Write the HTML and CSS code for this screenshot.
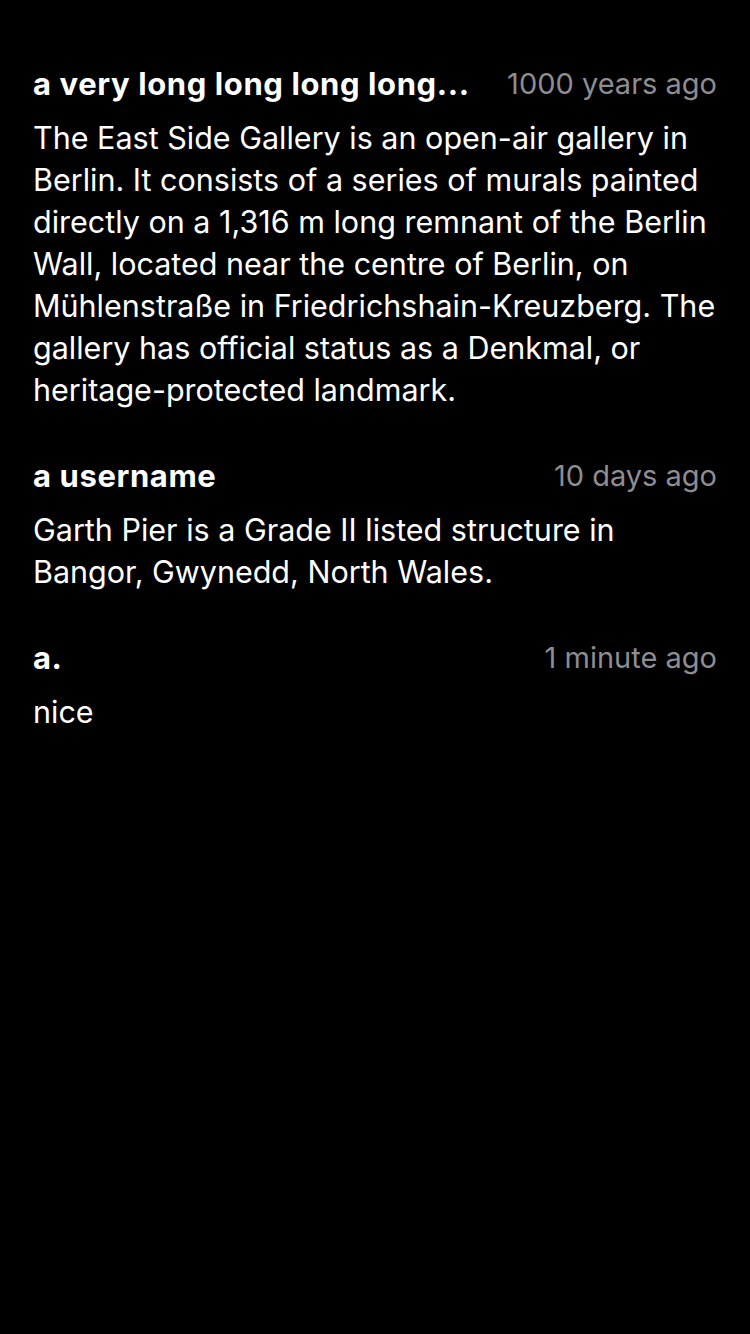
FILE: index.html
```html
<!DOCTYPE html>
<html lang="en">
<head>
<meta charset="utf-8">
<title>Comments</title>
<link rel="stylesheet" href="styles.css">
</head>
<body>
<main class="comments">
  <article class="comment">
    <header class="comment-head">
      <span class="author">a very long long long long...</span>
      <span class="time">1000 years ago</span>
    </header>
    <p class="body">The East Side Gallery is an open-air gallery in Berlin. It consists of a series of murals painted directly on a 1,316&nbsp;m long remnant of the Berlin Wall, located near the centre of Berlin, on Mühlenstraße in Friedrichshain-Kreuzberg. The gallery has official status as a Denkmal, or heritage-protected landmark.</p>
  </article>
  <article class="comment">
    <header class="comment-head">
      <span class="author">a username</span>
      <span class="time">10 days ago</span>
    </header>
    <p class="body">Garth Pier is a Grade II listed structure in Bangor, Gwynedd, North Wales.</p>
  </article>
  <article class="comment">
    <header class="comment-head">
      <span class="author">a.</span>
      <span class="time">1 minute ago</span>
    </header>
    <p class="body">nice</p>
  </article>
</main>
</body>
</html>
```
FILE: styles.css
```css
html, body {
  margin: 0;
  padding: 0;
  background: #000;
}
body {
  min-height: 1334px;
  font-family: Inter, "Noto Sans", "Liberation Sans", sans-serif;
  color: #fff;
}
.comments {
  display: flex;
  flex-direction: column;
  gap: 44px;
  padding: 63px 33px 0 33px;
}
.comment {
  display: flex;
  flex-direction: column;
  gap: 12px;
}
.comment-head {
  display: flex;
  align-items: center;
  justify-content: space-between;
  gap: 24px;
  line-height: 42px;
}
.author {
  flex: 0 1 auto;
  min-width: 0;
  font-size: 31px;
  font-weight: 700;
  letter-spacing: 0.6px;
  white-space: nowrap;
  overflow: hidden;
  text-overflow: ellipsis;
}
.time {
  flex: 0 0 auto;
  font-size: 29px;
  color: #8d8d92;
  white-space: nowrap;
}
.body {
  margin: 0;
  font-size: 30.5px;
  line-height: 42px;
}
```
